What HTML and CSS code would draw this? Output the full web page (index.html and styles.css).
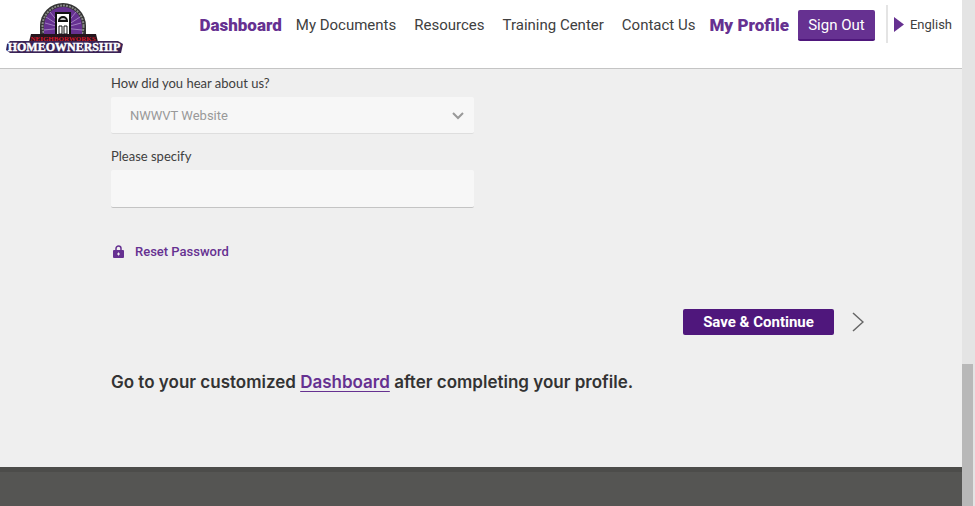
FILE: index.html
```
<!doctype html>
<html lang="en">
<head>
    <meta charset="UTF-8">
    <meta name="viewport" content="width=device-width, initial-scale=1.0">
    <title>My Profile</title>
    <link rel="stylesheet" href="styles.css">
</head>
<body>
<div id="page">
    <header>
        <a class="logo" href="#" aria-label="NeighborWorks Homeownership">
            <svg width="120" height="54" viewBox="0 0 120 54">
                <path d="M35 40V26a23 23 0 0 1 46 0v14z" fill="#333"/>
                <circle cx="58" cy="26" r="20.5" fill="none" stroke="#888" stroke-width="2" stroke-dasharray="2 1"/>
                <path d="M39 40V26a19 19 0 0 1 38 0v14z" fill="#663191"/>
                <path d="M58 28L41 17M58 28L40 23M58 28L39 30M58 28L45 12M58 28L71 12M58 28L75 17M58 28L76 23M58 28L77 30" stroke="#a17fc0"/>
                <path d="M51 37V13h14v24z" fill="#fff" stroke="#111" stroke-width="2"/>
                <path d="M54 21a4 4 0 0 1 8 0z" fill="#ccc" stroke="#111" stroke-width="2"/>
                <path d="M54 26h3v8h-3zM59 26h3v8h-3z" fill="#fff" stroke="#111"/>
                <path d="M26 34h65l2 8H24z" fill="#24151d"/>
                <path d="M5 41h108l5 3-2 9H5l-4-3 1-6z" fill="#3b2356"/>
                <text class="logo-small" x="58" y="41" text-anchor="middle">NEIGHBORWORKS</text>
                <text class="logo-large" x="59" y="51" text-anchor="middle">HOMEOWNERSHIP</text>
            </svg>
        </a>
        <nav>
            <a class="current" href="#">Dashboard</a>
            <a href="#">My Documents</a>
            <a href="#">Resources</a>
            <a href="#">Training Center</a>
            <a href="#">Contact Us</a>
            <a class="current" href="#">My Profile</a>
        </nav>
        <button class="sign-out" type="button">Sign Out</button>
        <a class="language" href="#">
            <svg width="10" height="15" viewBox="0 0 10 15"><path d="M0 0l10 7.500L0 15z" fill="#663191"/></svg>
            English
        </a>
    </header>
    <main>
        <form action="#">
            <div class="field">
                <label for="source">How did you hear about us?</label>
                <div class="select">
                    <select id="source">
                        <option>NWWVT Website</option>
                    </select>
                    <svg width="12" height="8" viewBox="0 0 12 8"><path d="M1 1l5 5 5-5" fill="none" stroke="#999" stroke-width="2"/></svg>
                </div>
            </div>
            <div class="field">
                <label for="specify">Please specify</label>
                <input id="specify" type="text">
            </div>
            <a class="reset" href="#">
                <svg width="11" height="14" viewBox="0 0 11 14">
                    <path d="M3 6V3.500a2.500 2.500 0 0 1 5 0v2.500" fill="none" stroke="#663191" stroke-width="1.500"/>
                    <rect y="5" width="11" height="8" rx="1" fill="#663191"/>
                    <path d="M4 9h3M5.500 7.500v3" stroke="#efefef"/>
                </svg>
                Reset Password
            </a>
            <div class="actions">
                <button class="save" type="submit">Save &amp; Continue</button>
                <a href="#" aria-label="Next">
                    <svg width="12" height="20" viewBox="0 0 12 20"><path d="M1 1l10 9-10 9" fill="none" stroke="#666" stroke-width="1.500"/></svg>
                </a>
            </div>
        </form>
        <p class="hint">Go to your customized <a href="#">Dashboard</a> after completing your profile.</p>
    </main>
    <footer></footer>
</div>
<div class="scrollbar">
    <div class="thumb"></div>
</div>
</body>
</html>
```
FILE: styles.css
```
* {
    box-sizing: border-box;
}

body {
    margin: 0;
    display: flex;
    min-height: 100vh;
    background: #efefef;
    color: #404040;
    font-family: Roboto, "Liberation Sans", sans-serif;
    font-size: 13px;
}

a {
    color: inherit;
    text-decoration: none;
}

svg {
    display: block;
}

button {
    cursor: pointer;
    border: 0;
    border-radius: 2px;
    color: #fff;
    font-family: inherit;
    font-size: 15px;
}

#page {
    flex: 1;
    display: flex;
    flex-direction: column;
}

header {
    display: flex;
    align-items: flex-start;
    height: 69px;
    padding-right: 10px;
    border-bottom: 1px solid #c4c4c4;
    background: #fff;
}

.logo {
    padding-left: 5px;
}

.logo-small {
    fill: #d5162c;
    font: bold 7px "Liberation Serif", serif;
}

.logo-large {
    fill: #fff;
    stroke: #fff;
    stroke-width: 0.400px;
    font: bold 12px "Liberation Serif", serif;
}

nav {
    display: flex;
    flex: 1;
    justify-content: flex-end;
    gap: 18px;
    margin-right: 9px;
    font-size: 15px;
    line-height: 50px;
    white-space: nowrap;
}

nav .current {
    color: #663191;
    font-size: 17px;
    font-weight: 900;
}

nav .current:first-child {
    margin-right: -4px;
}

nav .current:last-child {
    margin-left: -4px;
}

.sign-out {
    width: 77px;
    height: 31px;
    margin-top: 10px;
    padding: 0;
    border-bottom: 2px solid #4f177c;
    background: #663191;
}

.language {
    display: flex;
    align-items: center;
    gap: 6px;
    height: 38px;
    margin: 5px 0 0 11px;
    padding-left: 6px;
    border-left: 2px solid #e4e4e4;
}

main {
    flex: 1;
    padding: 6px 98px 0 111px;
}

.field {
    max-width: 363px;
    margin-bottom: 14px;
}

.field label {
    display: block;
    margin-bottom: 5px;
    font-family: Lato, "Liberation Sans", sans-serif;
    line-height: 17px;
}

.field input,
.field select {
    display: block;
    width: 100%;
    height: 37px;
    padding: 0 19px;
    border: 0;
    border-bottom: 1px solid #dedede;
    border-radius: 2px;
    background: #f7f7f7;
    color: #999;
    font: inherit;
    appearance: none;
}

.field input {
    height: 38px;
    border-bottom-color: #c4c4c4;
}

.select {
    display: grid;
    align-items: center;
}

.select select,
.select svg {
    grid-area: 1 / 1;
}

.select svg {
    justify-self: end;
    margin-right: 10px;
    pointer-events: none;
}

.reset {
    display: inline-flex;
    align-items: center;
    gap: 11px;
    margin-top: 20px;
    padding-left: 2px;
    color: #663191;
    font-weight: 500;
    line-height: 20px;
}

.actions {
    display: flex;
    align-items: center;
    justify-content: flex-end;
    gap: 18px;
    margin-top: 47px;
}

.save {
    width: 151px;
    height: 26px;
    padding: 0;
    background: #4f177c;
    font-weight: bold;
}

.hint {
    margin: 35px 0;
    color: #333;
    font-family: Inter, "Liberation Sans", sans-serif;
    font-size: 17px;
    font-weight: 600;
    line-height: 24px;
}

.hint a {
    color: #663191;
    text-decoration: underline;
    text-decoration-thickness: 1px;
    text-underline-offset: 3px;
}

footer {
    height: 39px;
    border-top: 5px solid #4c4c4a;
    background: #555553;
}

.scrollbar {
    display: flex;
    flex-direction: column;
    justify-content: flex-end;
    width: 13px;
    padding-right: 2px;
    background: #e4e4e4;
}

.thumb {
    height: 28%;
    background: #b8b8b8;
}
```
